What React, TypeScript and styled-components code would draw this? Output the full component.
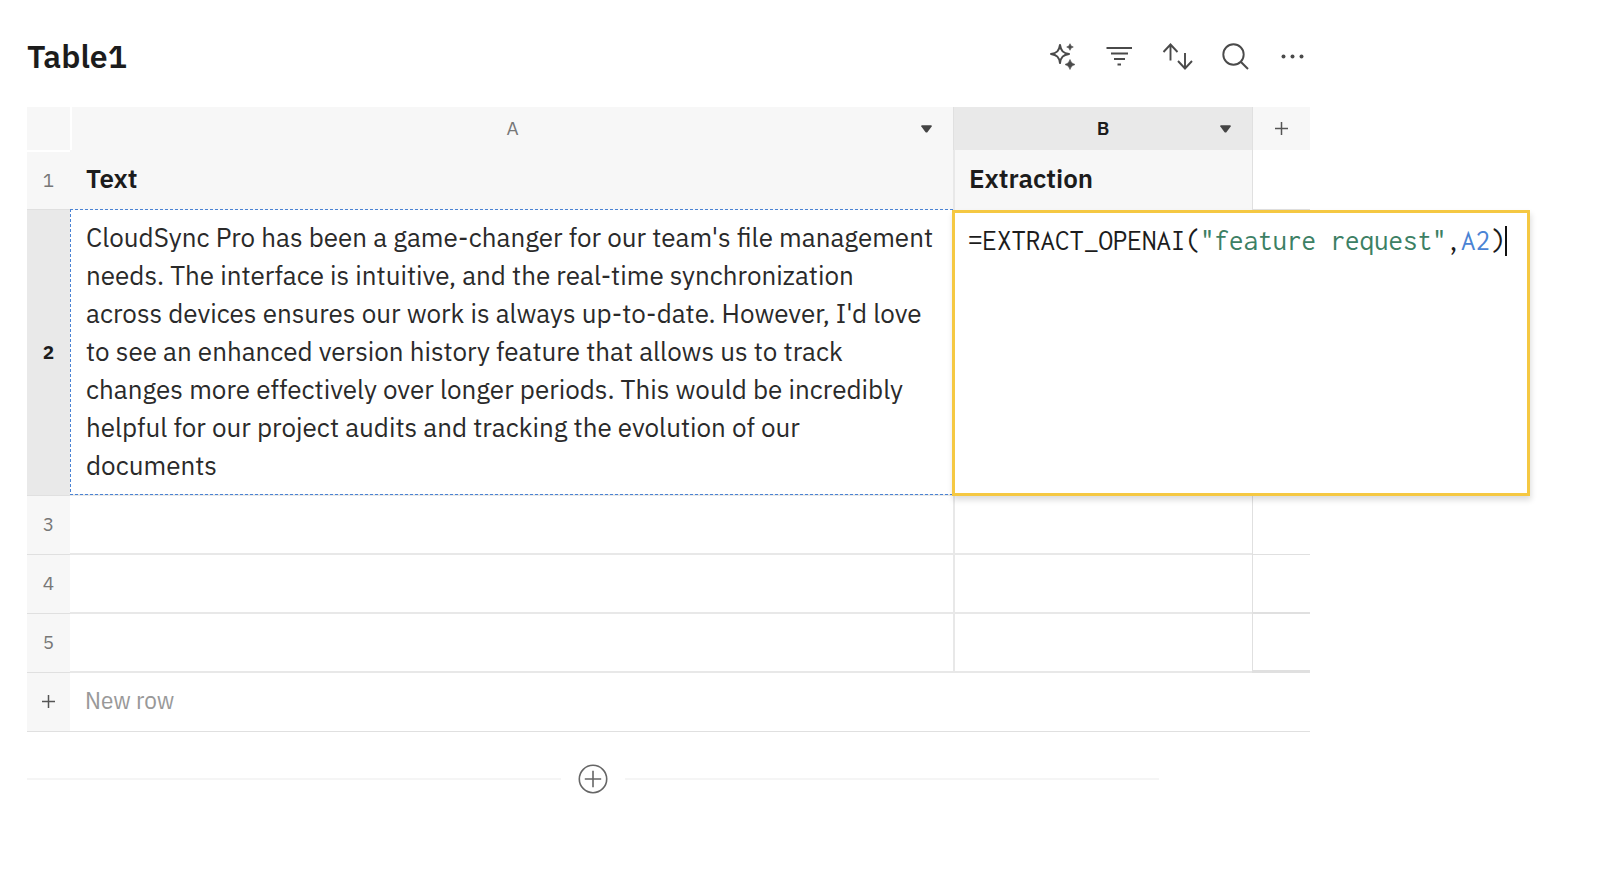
import React from 'react';
import styled, { createGlobalStyle, css } from 'styled-components';

const ink = '#1c1c1c';
const line = '#e0e0e0';
const softLine = '#e8e8e8';
const headerFill = '#f7f7f7';
const activeFill = '#e9e9e9';
const refBlue = '#4a83d4';
const editorYellow = '#f5c842';

const GlobalStyle = createGlobalStyle`
  *, *::before, *::after { box-sizing: border-box; }
  body {
    margin: 0;
    background: #fff;
    color: ${ink};
    font-family: "IBM Plex Sans", Inter, "Liberation Sans", sans-serif;
  }
`;

const Page = styled.main`
  padding: 36px 310px 48px 27px;
`;

const Header = styled.header`
  display: flex;
  align-items: center;
  justify-content: space-between;
  height: 40px;
  margin-bottom: 31px;
`;

const Title = styled.h1`
  margin: 0;
  font-size: 32px;
  line-height: 40px;
  font-weight: 600;
`;

const Toolbar = styled.div`
  display: flex;
  gap: 24px;
  padding-right: 1px;
`;

const PlainButton = styled.button`
  display: flex;
  align-items: center;
  justify-content: center;
  padding: 0;
  border: 0;
  background: none;
  color: #555;
  font: inherit;
  cursor: pointer;
`;

const ToolButton = styled(PlainButton)`
  width: 34px;
  height: 34px;
  color: #4a4a4a;
`;

const Icon = styled.svg`
  display: block;
  flex: none;
  fill: none;
  stroke: currentColor;
  stroke-width: 2;
`;

const Grid = styled.table`
  width: 100%;
  table-layout: fixed;
  border-collapse: separate;
  border-spacing: 0;

  th, td {
    padding: 0;
    text-align: left;
  }
`;

const Col = styled.col<{ $width?: number }>`
  ${({ $width }) => $width && css`width: ${$width}px;`}
`;

const Corner = styled.td`
  height: 43px;
  background: ${headerFill};
`;

const ColumnHead = styled.th<{ $active?: boolean; $first?: boolean }>`
  height: 43px;
  background: ${({ $active }) => ($active ? activeFill : headerFill)};
  border-left: ${({ $first }) => ($first ? '2px solid #fff' : `1px solid ${line}`)};
  color: ${({ $active }) => ($active ? ink : '#777')};
  font-size: 19px;
  line-height: 24px;
  font-weight: ${({ $active }) => ($active ? 600 : 400)};
`;

const ColumnLabel = styled.div`
  display: grid;
  grid-template-columns: 1fr auto 1fr;
  align-items: center;
  padding: 0 16px;

  button { justify-self: end; }
`;

const CaretButton = styled(PlainButton)`
  grid-column: 3;
  width: 22px;
  height: 22px;
  color: #444;
`;

const LetterName = styled.span`
  grid-column: 2;
  padding-bottom: 2px;
`;

const AddColumnButton = styled(PlainButton)`
  width: 100%;
  height: 42px;
`;

const RowHead = styled.th<{ $active?: boolean; $top?: boolean }>`
  && {
    padding-bottom: 2px;
    text-align: center;
  }
  border-top: ${({ $top }) => ($top ? '2px solid #fff' : '0')};
  border-bottom: 1px solid ${line};
  background: ${({ $active }) => ($active ? activeFill : headerFill)};
  color: ${({ $active }) => ($active ? ink : '#777')};
  font-size: 19px;
  line-height: 24px;
  font-weight: ${({ $active }) => ($active ? 700 : 400)};
`;

const TitleRow = styled.tr`
  height: 60px;
`;

const BodyRow = styled.tr`
  height: 59px;
`;

const Cell = styled.td<{ $second?: boolean }>`
  position: relative;
  border-bottom: 2px solid ${softLine};
  ${({ $second }) => $second && css`border-left: 2px solid ${softLine};`}
`;

const TitleCell = styled(Cell)`
  && { padding: 0 14px 5px ${({ $second }) => ($second ? 14 : 16)}px; }
  border-bottom: 0;
  background: ${headerFill};
  font-size: 26px;
  line-height: 38px;
  font-weight: 600;
`;

const TextCell = styled(Cell)`
  && { padding: 8px 19px 10px 16px; }
  font-size: 26px;
  line-height: 38px;
  color: #2a2a2a;
`;

const CellText = styled.p`
  margin: 0;
`;

/* Dashed outline drawn round the cell that the formula refers to. */
const ReferenceOutline = styled.div`
  position: absolute;
  inset: -1px 0 -1px 0;
  pointer-events: none;
  background:
    repeating-linear-gradient(90deg, ${refBlue} 0 3px, transparent 3px 5px) top / 100% 1px no-repeat,
    repeating-linear-gradient(90deg, ${refBlue} 0 3px, transparent 3px 5px) bottom / 100% 1px no-repeat,
    repeating-linear-gradient(180deg, ${refBlue} 0 3px, transparent 3px 5px) left / 1px 100% no-repeat;
`;

const Margin = styled.td<{ $weight?: number }>`
  border-left: 1px solid ${line};
  border-bottom: ${({ $weight = 1 }) => $weight}px solid ${line};
`;

/* The open editor grows past its own column to show the whole formula. */
const FormulaEditor = styled.div`
  position: absolute;
  z-index: 2;
  top: 0;
  left: -3px;
  bottom: -2px;
  min-width: 578px;
  padding: 9px 13px;
  border: 3px solid ${editorYellow};
  background: #fff;
  box-shadow: 1px 4px 6px rgba(0, 0, 0, 0.14);
  display: flex;
  align-items: flex-start;
  outline: 0;
  white-space: pre;
  font-family: Inconsolata, "Roboto Mono", "Liberation Mono", monospace;
  font-size: 29px;
  line-height: 38px;
`;

const StringToken = styled.span`
  color: #3c8064;
`;

const CellToken = styled.span`
  color: ${refBlue};
`;

const TextCursor = styled.span`
  width: 2px;
  height: 30px;
  margin-top: 4px;
  background: #111;
`;

const NewRowCell = styled.td`
  border-bottom: 1px solid ${line};
`;

const NewRowButton = styled(PlainButton)`
  justify-content: flex-start;
  width: 100%;
  height: 58px;
  padding: 0 15px 5px;
  color: #999;
  font-family: "IBM Plex Sans Condensed", Roboto, "Liberation Sans", sans-serif;
  font-size: 25px;
  line-height: 38px;
`;

const NewRowPlus = styled(PlainButton)`
  width: 100%;
  height: 56px;
`;

const InsertBar = styled.div`
  display: flex;
  align-items: center;
  gap: 17px;
  margin: 32px 151px 0 0;
`;

const Rule = styled.div`
  flex: 1;
  height: 2px;
  background: #f5f5f5;
`;

const InsertButton = styled(PlainButton)`
  width: 30px;
  height: 30px;
  color: #666;
`;

function Plus() {
  return (
    <Icon width="13" height="13" viewBox="0 0 13 13" aria-hidden="true">
      <path d="M6.500 0V13M0 6.500H13" strokeWidth="1.500" />
    </Icon>
  );
}

function Caret() {
  return (
    <Icon width="11" height="8" viewBox="0 0 11 8" aria-hidden="true">
      <path
        d="M1 .3H10Q11 .3 10.7 1.6L6.6 6.9Q5.5 8 4.4 6.9L.3 1.6Q0 .3 1 .3Z"
        fill="currentColor"
        stroke="none"
      />
    </Icon>
  );
}

const tools = [
  {
    label: 'AI assistant',
    art: (
      <>
        <path d="M17 6C17.900 11.900 20.100 14.100 26 15C20.100 15.900 17.900 18.100 17 24C16.100 18.100 13.900 15.900 8 15C13.900 14.100 16.100 11.900 17 6Z" strokeLinejoin="round" />
        <path
          d="M27 4.700Q27.500 7.500 30.300 8Q27.500 8.500 27 11.300Q26.500 8.500 23.700 8Q26.500 7.500 27 4.700ZM27 20.500Q27.900 24.600 32 25.500Q27.900 26.400 27 30.500Q26.100 26.400 22 25.500Q26.100 24.600 27 20.500Z"
          fill="currentColor"
          strokeWidth=".6"
        />
      </>
    ),
  },
  { label: 'Filter', art: <path d="M5.500 9H31M10 14.500H27M13 20H24M16.500 25.500H20" strokeWidth="1.900" /> },
  {
    label: 'Sort',
    art: <path d="M11.500 21.500V5.500M4.500 13L11.500 5.500L18.500 13M26 14V29.500M19 22L26 29.500L33 22" strokeWidth="1.900" />,
  },
  {
    label: 'Search',
    art: (
      <>
        <circle cx="16.500" cy="15.500" r="10.200" strokeWidth="1.900" />
        <path d="M23.700 22.700L31 30" />
      </>
    ),
  },
  {
    label: 'More options',
    art: (
      <g fill="currentColor" stroke="none">
        <circle cx="8.500" cy="17.500" r="2" />
        <circle cx="17.500" cy="17.500" r="2" />
        <circle cx="26.500" cy="17.500" r="2" />
      </g>
    ),
  },
];

const emptyRows = [3, 4, 5];

const review =
  "CloudSync Pro has been a game-changer for our team's file management needs. The interface is intuitive, and the real-time synchronization across devices ensures our work is always up-to-date. However, I'd love to see an enhanced version history feature that allows us to track changes more effectively over longer periods. This would be incredibly helpful for our project audits and tracking the evolution of our documents";

export default function App() {
  return (
    <>
      <GlobalStyle />
      <Page>
        <Header>
          <Title>Table1</Title>
          <Toolbar role="toolbar" aria-label="Table tools">
            {tools.map(({ label, art }) => (
              <ToolButton key={label} type="button" aria-label={label}>
                <Icon width="34" height="34" viewBox="0 0 34 34" aria-hidden="true">
                  {art}
                </Icon>
              </ToolButton>
            ))}
          </Toolbar>
        </Header>

        <Grid>
          <colgroup>
            <Col $width={43} />
            <Col />
            <Col $width={299} />
            <Col $width={58} />
          </colgroup>
          <thead>
            <tr>
              <Corner />
              <ColumnHead scope="col" $first>
                <ColumnLabel>
                  <LetterName>A</LetterName>
                  <CaretButton type="button" aria-label="Column A menu">
                    <Caret />
                  </CaretButton>
                </ColumnLabel>
              </ColumnHead>
              <ColumnHead scope="col" $active>
                <ColumnLabel>
                  <LetterName>B</LetterName>
                  <CaretButton type="button" aria-label="Column B menu">
                    <Caret />
                  </CaretButton>
                </ColumnLabel>
              </ColumnHead>
              <ColumnHead scope="col">
                <AddColumnButton type="button" aria-label="Add column">
                  <Plus />
                </AddColumnButton>
              </ColumnHead>
            </tr>
          </thead>
          <tbody>
            <TitleRow>
              <RowHead scope="row" $top>1</RowHead>
              <TitleCell>Text</TitleCell>
              <TitleCell $second>Extraction</TitleCell>
              <Margin />
            </TitleRow>
            <BodyRow>
              <RowHead scope="row" $active>2</RowHead>
              <TextCell>
                <CellText>{review}</CellText>
                <ReferenceOutline />
              </TextCell>
              <Cell $second>
                <FormulaEditor
                  role="textbox"
                  aria-label="Formula for B2"
                  contentEditable
                  suppressContentEditableWarning
                  spellCheck={false}
                >
                  <span>
                    =EXTRACT_OPENAI(<StringToken>"feature request"</StringToken>,<CellToken>A2</CellToken>)
                  </span>
                  <TextCursor />
                </FormulaEditor>
              </Cell>
              <Margin />
            </BodyRow>
            {emptyRows.map((row, index) => (
              <BodyRow key={row}>
                <RowHead scope="row">{row}</RowHead>
                <Cell />
                <Cell $second />
                <Margin $weight={index + 1} />
              </BodyRow>
            ))}
            <BodyRow>
              <RowHead scope="row">
                <NewRowPlus type="button" aria-label="Add row">
                  <Plus />
                </NewRowPlus>
              </RowHead>
              <NewRowCell colSpan={3}>
                <NewRowButton type="button">New row</NewRowButton>
              </NewRowCell>
            </BodyRow>
          </tbody>
        </Grid>

        <InsertBar>
          <Rule />
          <InsertButton type="button" aria-label="Insert block">
            <Icon width="30" height="30" viewBox="0 0 30 30" aria-hidden="true">
              <circle cx="15" cy="15" r="13.700" strokeWidth="1.600" />
              <path d="M15 6.800V23.200M6.800 15H23.200" strokeWidth="1.600" />
            </Icon>
          </InsertButton>
          <Rule />
        </InsertBar>
      </Page>
    </>
  );
}
